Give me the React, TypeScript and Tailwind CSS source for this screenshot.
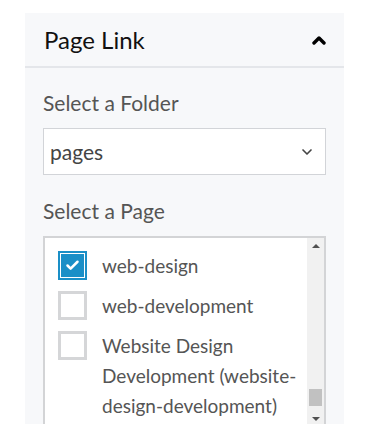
import { ChevronDown, Check } from "lucide-react";

const pages = [
  { name: "web-design", checked: true },
  { name: "web-development", checked: false },
  { name: "Website Design Development (website-design-development)", checked: false },
];

export default function App() {
  return (
    <div className="h-[424px] overflow-hidden bg-white pt-[13px] pl-[25px] font-['Lato',sans-serif]">
      <div className="w-[319px] bg-[#f7f8fa]">
        {/* Header */}
        <div className="flex h-[55px] items-center justify-between border-b-2 border-[#e4e6ea] px-[19px]">
          <span className="text-[24px] text-[#111]">Page Link</span>
          <svg width="14" height="10" viewBox="0 0 14 10" className="mr-[-1px]">
            <polyline points="2,8 7,3 12,8" fill="none" stroke="#000" strokeWidth="3.4" strokeLinecap="round" strokeLinejoin="round" />
          </svg>
        </div>

        <div className="px-[18px] pt-[23px] pb-4">
          <p className="text-[21px] leading-[24px] text-[#555]">Select a Folder</p>
          <div className="mt-[13px] flex h-[47px] items-center justify-between border border-[#d2d4d8] bg-white pl-[6px] pr-[10px]">
            <span className="text-[21px] text-[#444]">pages</span>
            <ChevronDown size={16} strokeWidth={2.5} className="text-[#444]" />
          </div>

          <p className="mt-[24px] text-[21px] leading-[24px] text-[#555]">Select a Page</p>
          <div className="mt-[13px] flex h-[200px] border-2 border-[#d3d4d6] bg-white">
            <div className="flex flex-1 flex-col gap-[10px] pt-[13px] pl-[13px]">
              {pages.map((p) => (
                <div key={p.name} className="flex items-start gap-[15px]">
                  {p.checked ? (
                    <div className="flex h-[29px] w-[29px] shrink-0 items-center justify-center bg-[#1a8fc7] p-[2px]">
                      <div className="flex h-full w-full items-center justify-center border border-white">
                        <Check size={15} strokeWidth={4} className="text-white" />
                      </div>
                    </div>
                  ) : (
                    <div className="h-[29px] w-[29px] shrink-0 border-[3px] border-[#d5d6d8] bg-white" />
                  )}
                  <span className="w-[200px] text-[19px] leading-[30px] text-[#555]">{p.name}</span>
                </div>
              ))}
            </div>
            {/* scrollbar */}
            <div className="flex w-[17px] flex-col items-center bg-[#f1f1f1]">
              <div className="mt-[6px] h-0 w-0 border-x-[4px] border-b-[4px] border-x-transparent border-b-[#505050]" />
              <div className="mt-[141px] h-[17px] w-[13px] bg-[#c1c1c1]" />
              <div className="mt-[11px] h-0 w-0 border-x-[4px] border-t-[4px] border-x-transparent border-t-[#505050]" />
            </div>
          </div>
        </div>
      </div>
    </div>
  );
}
